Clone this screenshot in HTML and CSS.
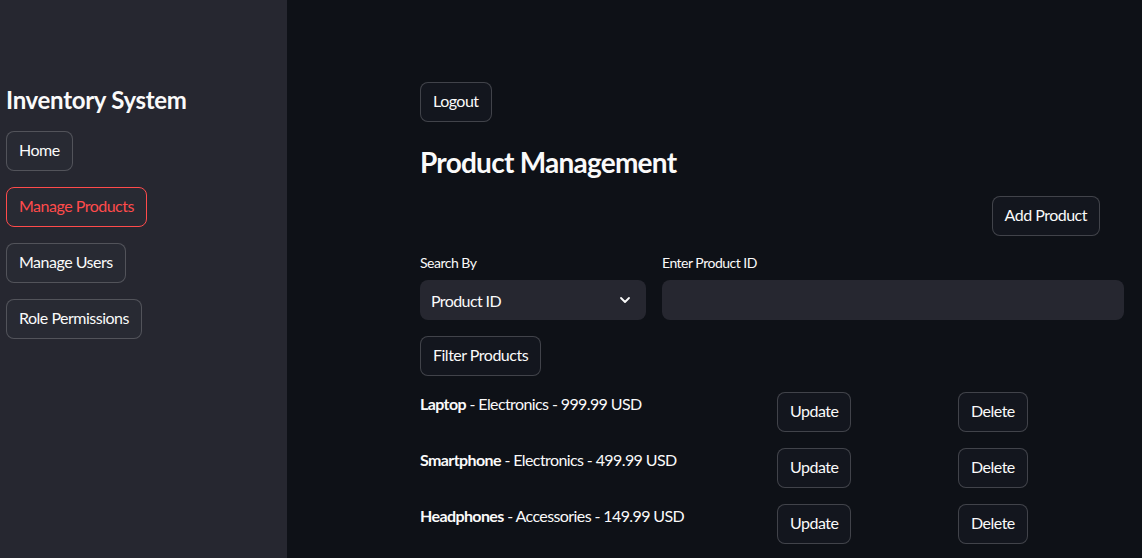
FILE: index.html
```html
<!DOCTYPE html>
<html lang="en">
<head>
<meta charset="utf-8">
<title>Inventory System</title>
<link rel="stylesheet" href="styles.css">
</head>
<body>
<div class="app">
  <aside class="sidebar">
    <h2 class="side-title">Inventory System</h2>
    <nav class="side-nav">
      <button class="btn side-btn">Home</button>
      <button class="btn side-btn active">Manage Products</button>
      <button class="btn side-btn">Manage Users</button>
      <button class="btn side-btn">Role Permissions</button>
    </nav>
  </aside>
  <main class="main">
    <div class="content">
      <div class="row-start"><button class="btn">Logout</button></div>
      <h3 class="page-title">Product Management</h3>
      <div class="add-row"><button class="btn">Add Product</button></div>
      <div class="search-grid">
        <div class="field">
          <label class="label">Search By</label>
          <div class="select">
            <span>Product ID</span>
            <svg class="chev" width="12" height="8" viewBox="0 0 12 8"><path d="M2 2 L6 6 L10 2" fill="none" stroke="#fafafa" stroke-width="1.8" stroke-linecap="round" stroke-linejoin="round"/></svg>
          </div>
        </div>
        <div class="field">
          <label class="label">Enter Product ID</label>
          <div class="input"></div>
        </div>
      </div>
      <div class="row-start"><button class="btn">Filter Products</button></div>
      <div class="products">
        <div class="product">
          <div class="p-text"><b>Laptop</b> - Electronics - 999.99 USD</div>
          <div><button class="btn">Update</button></div>
          <div><button class="btn">Delete</button></div>
        </div>
        <div class="product">
          <div class="p-text"><b>Smartphone</b> - Electronics - 499.99 USD</div>
          <div><button class="btn">Update</button></div>
          <div><button class="btn">Delete</button></div>
        </div>
        <div class="product">
          <div class="p-text"><b>Headphones</b> - Accessories - 149.99 USD</div>
          <div><button class="btn">Update</button></div>
          <div><button class="btn">Delete</button></div>
        </div>
      </div>
    </div>
  </main>
</div>
</body>
</html>
```
FILE: styles.css
```css
* { box-sizing: border-box; }
html, body {
  margin: 0;
  padding: 0;
  height: 100%;
  background: #0e1117;
  color: #fafafa;
  font-family: Lato, "Noto Sans", sans-serif;
  overflow: hidden;
}
.app {
  display: flex;
  height: 558px;
}
.sidebar {
  width: 287px;
  flex: none;
  background: #262730;
  padding: 86px 6px 0 6px;
}
.side-title {
  margin: 0;
  font-size: 24px;
  line-height: 28px;
  font-weight: 700;
  letter-spacing: -0.3px;
}
.side-nav {
  display: flex;
  flex-direction: column;
  align-items: flex-start;
  gap: 16px;
  margin-top: 17px;
}
.btn {
  font-family: inherit;
  font-size: 16px;
  letter-spacing: -0.5px;
  height: 40px;
  padding: 0 12px;
  border-radius: 8px;
  border: 1px solid rgba(250, 250, 250, 0.2);
  background: #13161e;
  color: #fafafa;
  line-height: 36px;
  padding-bottom: 2px;
  cursor: pointer;
  white-space: nowrap;
}
.side-btn {
  background: #282a33;
}
.side-btn.active {
  color: #ff4b4b;
  border-color: #ff4b4b;
}
.main {
  flex: 1;
  padding: 82px 18px 0 133px;
}
.content {
  width: 704px;
}
.row-start { display: flex; }
.page-title {
  margin: 23px 0 0 0;
  font-size: 28px;
  line-height: 34px;
  font-weight: 700;
  letter-spacing: -0.75px;
}
.add-row {
  display: flex;
  justify-content: flex-end;
  padding-right: 24px;
  margin-top: 17px;
}
.search-grid {
  display: grid;
  grid-template-columns: 226px 1fr;
  gap: 16px;
  margin-top: 17px;
}
.field {
  display: flex;
  flex-direction: column;
  gap: 7px;
}
.label {
  font-size: 14px;
  line-height: 20px;
  letter-spacing: -0.5px;
}
.select, .input {
  height: 40px;
  background: #262730;
  border-radius: 8px;
}
.select {
  display: flex;
  align-items: center;
  justify-content: space-between;
  padding: 0 15px 0 11px;
  font-size: 16px;
  letter-spacing: -0.6px;
}
.search-grid + .row-start { margin-top: 16px; }
.products {
  display: flex;
  flex-direction: column;
  gap: 16px;
  margin-top: 16px;
}
.product {
  display: grid;
  grid-template-columns: 357px 181px 1fr;
  align-items: start;
  height: 40px;
}
.p-text {
  font-size: 16px;
  line-height: 24px;
  letter-spacing: -0.6px;
}
.p-text b { font-weight: 700; }
```
